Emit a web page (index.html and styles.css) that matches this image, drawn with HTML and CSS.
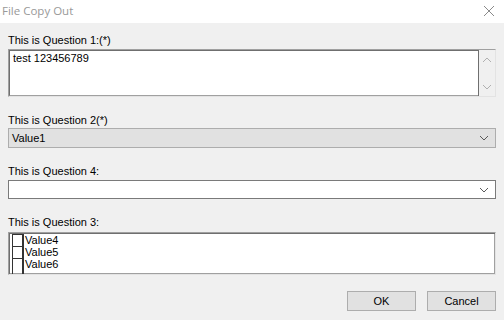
FILE: index.html
```html
<!DOCTYPE html>
<html lang="en">

<head>
    <meta charset="UTF-8">
    <meta name="viewport" content="width=device-width, initial-scale=1.0">
    <title>File Copy Out</title>

    <link rel="stylesheet" href="styles.css">
</head>

<body>
    <div class="window">
        <div class="titleBar">
            <span class="titleText">File Copy Out</span>
            <svg class="closeIcon" width="12" height="12" viewBox="0 0 12 12">
                <path d="M1 1 L11 11 M11 1 L1 11" stroke="#8a8a8a" stroke-width="1" fill="none" />
            </svg>
        </div>

        <div class="content">
            <!-- question 1 : memo -->
            <div class="question q1">
                <div class="label">This is Question 1:(*)</div>
                <div class="memo">
                    <div class="memoText">test 123456789</div>
                    <div class="vScroll">
                        <svg width="10" height="6" viewBox="0 0 10 6">
                            <path d="M1 5 L5 1 L9 5" stroke="#b0b0b0" fill="none" />
                        </svg>
                        <svg width="10" height="6" viewBox="0 0 10 6">
                            <path d="M1 1 L5 5 L9 1" stroke="#b0b0b0" fill="none" />
                        </svg>
                    </div>
                </div>
            </div>

            <!-- question 2 : readonly combo -->
            <div class="question q2">
                <div class="label">This is Question 2(*)</div>
                <div class="combo comboGray">
                    <span>Value1</span>
                    <svg width="10" height="6" viewBox="0 0 10 6">
                        <path d="M1 1 L5 5 L9 1" stroke="#5a5a5a" fill="none" />
                    </svg>
                </div>
            </div>

            <!-- question 4 : editable combo -->
            <div class="question q4">
                <div class="label">This is Question 4:</div>
                <div class="combo comboWhite">
                    <span></span>
                    <svg width="10" height="6" viewBox="0 0 10 6">
                        <path d="M1 1 L5 5 L9 1" stroke="#5a5a5a" fill="none" />
                    </svg>
                </div>
            </div>

            <!-- question 3 : checked list -->
            <div class="question q3">
                <div class="label">This is Question 3:</div>
                <div class="checkList">
                    <div class="checkRow"><span class="box"></span>Value4</div>
                    <div class="checkRow"><span class="box"></span>Value5</div>
                    <div class="checkRow"><span class="box"></span>Value6</div>
                </div>
            </div>

            <div class="buttons">
                <button class="btn">OK</button>
                <button class="btn">Cancel</button>
            </div>
        </div>
    </div>
</body>

</html>
```

FILE: styles.css
```css
body {
    margin: 0;
    background-color: #f0f0f0;
    font-family: "Liberation Sans", Arial, sans-serif;
    font-size: 11px;
    color: #000;
}

.window {
    width: 504px;
    height: 320px;
    overflow: hidden;
}

/* title */
.titleBar {
    height: 23px;
    background-color: white;
    display: flex;
    align-items: center;
    justify-content: space-between;
    padding: 0 9px 0 2px;
    box-sizing: border-box;
}

.titleText {
    font-family: "Open Sans", "Noto Sans", sans-serif;
    font-size: 11.5px;
    color: #999999;
    margin-top: -2px;
}

.closeIcon {
    margin-top: -2px;
}

/* form */
.content {
    padding: 10px 8px 0 8px;
}

.label {
    height: 14px;
    line-height: 14px;
    margin-bottom: 2px;
}

.q2,
.q4,
.q3 {
    margin-top: 16px;
}

.q2 .label {
    margin-bottom: 1px;
}

.q3 .label {
    margin-bottom: 3px;
}

.memo {
    height: 48px;
    display: flex;
    background-color: white;
    border: 1px solid #a0a0a0;
    border-bottom-color: #e3e3e3;
    border-right-color: #e3e3e3;
    box-sizing: border-box;
}

.memoText {
    flex: 1;
    border: 1px solid #6f6f6f;
    border-right: none;
    border-bottom-color: #a0a0a0;
    padding: 1px 3px;
}

.vScroll {
    width: 16px;
    background-color: #f0f0f0;
    border-left: 1px solid #6f6f6f;
    display: flex;
    flex-direction: column;
    justify-content: space-between;
    align-items: center;
    padding: 7px 0 6px 0;
}

.combo {
    height: 20px;
    box-sizing: border-box;
    display: flex;
    align-items: center;
    justify-content: space-between;
    padding: 0 6px 0 3px;
}

.comboGray {
    background-color: #e1e1e1;
    border: 1px solid #adadad;
}

.comboWhite {
    height: 19px;
    background-color: white;
    border: 1px solid #7a7a7a;
}

.checkList {
    height: 43px;
    box-sizing: border-box;
    background-color: white;
    border: 1px solid #a0a0a0;
    border-bottom-color: #e3e3e3;
    border-right-color: #e3e3e3;
    box-shadow: inset 1px 1px 0 #6f6f6f, inset -1px -1px 0 #a0a0a0;
    padding: 1px 0 0 3px;
    overflow: hidden;
}

.checkRow {
    height: 12px;
    line-height: 13px;
    display: flex;
    align-items: flex-start;
}

.box {
    width: 12px;
    height: 13px;
    box-sizing: border-box;
    border: 1px solid #333;
    border-bottom: none;
    border-right-width: 2px;
    margin-right: 1px;
    flex: none;
}

.checkRow:last-child .box {
    height: 16px;
}

.buttons {
    display: flex;
    justify-content: flex-end;
    gap: 11px;
    margin-top: 16px;
}

.btn {
    width: 69px;
    height: 20px;
    background-color: #e1e1e1;
    border: 1px solid #adadad;
    font-family: "Liberation Sans", Arial, sans-serif;
    font-size: 11px;
    color: #000;
    padding: 0;
}
```
